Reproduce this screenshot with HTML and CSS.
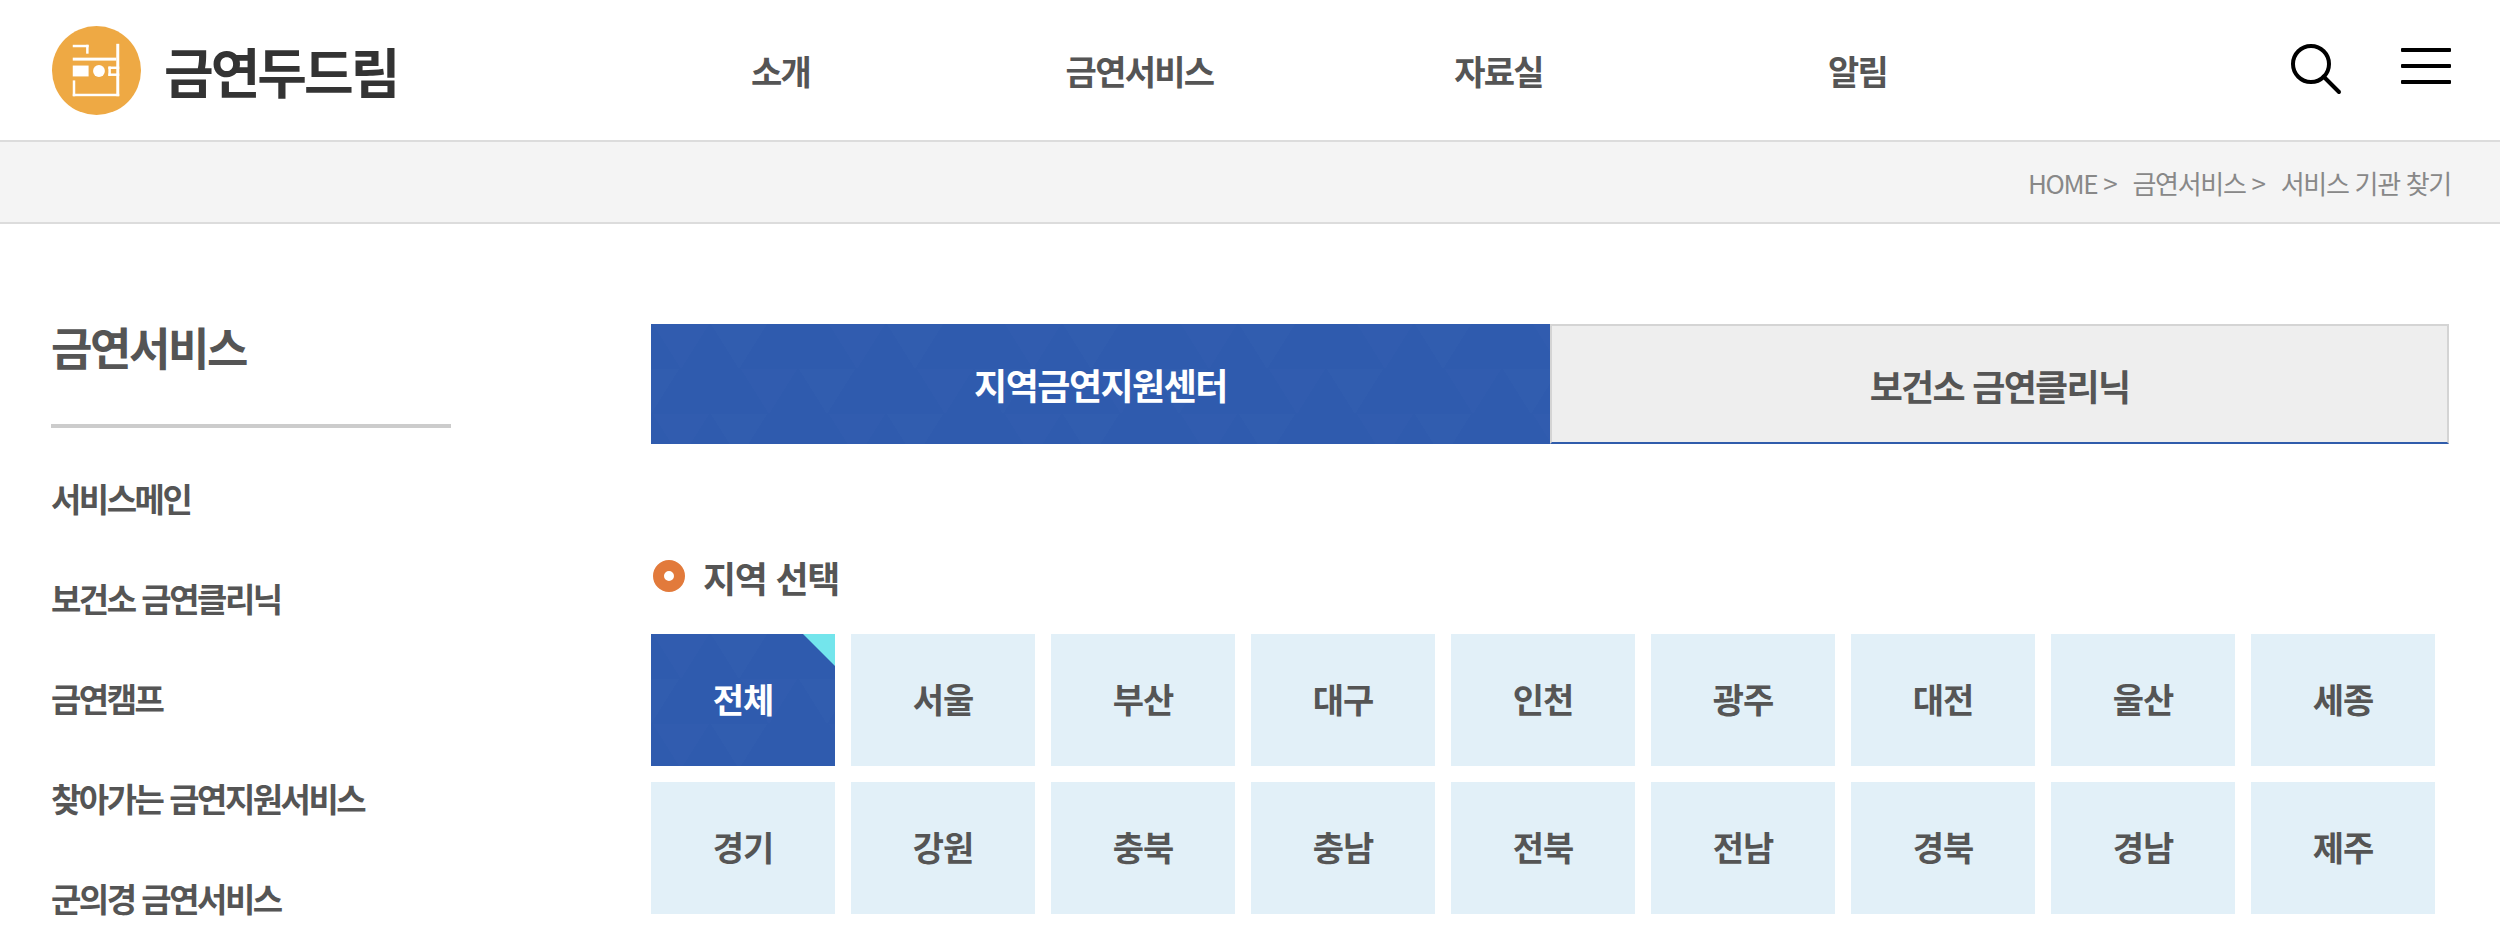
FILE: index.html
```html
<!DOCTYPE html>
<html lang="ko">
<head>
<meta charset="UTF-8">
<title>금연두드림</title>
<link rel="stylesheet" href="styles.css">
</head>
<body>
<header class="header">
  <a class="logo" href="#">
    <svg class="logo-mark" viewBox="0 0 90 90">
      <circle cx="45" cy="45" r="45" fill="#eea944"/>
      <g fill="#fff">
        <rect x="21" y="19" width="16" height="2.5"/>
        <rect x="34.5" y="19" width="2.5" height="9"/>
        <rect x="21" y="32" width="44" height="3"/>
        <rect x="65" y="18" width="3" height="53"/>
        <rect x="21" y="40" width="16" height="11"/>
        <circle cx="47.5" cy="45.5" r="6"/>
        <rect x="57" y="41" width="11" height="2.5"/>
        <rect x="57" y="48" width="11" height="2.5"/>
        <rect x="57" y="41" width="2.5" height="9.5"/>
        <rect x="21" y="55" width="2.5" height="16"/>
        <rect x="21" y="68.5" width="47" height="2.5"/>
      </g>
    </svg>
    <span class="logo-text">금연두드림</span>
  </a>
  <nav class="gnb">
    <a href="#">소개</a>
    <a href="#">금연서비스</a>
    <a href="#">자료실</a>
    <a href="#">알림</a>
  </nav>
  <div class="util">
    <svg class="icon-search" viewBox="0 0 52 52">
      <circle cx="21" cy="21" r="18" fill="none" stroke="#000" stroke-width="4"/>
      <path d="M33.5 33.5 L49 49" stroke="#000" stroke-width="4" stroke-linecap="round"/>
    </svg>
    <div class="icon-menu"><span></span><span></span><span></span></div>
  </div>
</header>

<div class="breadcrumb">
  <span>HOME &gt;</span>
  <span>금연서비스 &gt;</span>
  <span>서비스 기관 찾기</span>
</div>

<div class="wrap">
  <aside class="side">
    <h2 class="side-title">금연서비스</h2>
    <ul class="side-menu">
      <li>서비스메인</li>
      <li>보건소 금연클리닉</li>
      <li>금연캠프</li>
      <li>찾아가는 금연지원서비스</li>
      <li>군의경 금연서비스</li>
    </ul>
  </aside>

  <main class="content">
    <div class="tabs">
      <a class="tab tab-on" href="#">지역금연지원센터</a>
      <a class="tab" href="#">보건소 금연클리닉</a>
    </div>

    <h3 class="sec-title">지역 선택</h3>
    <div class="region-grid">
      <a class="region region-on" href="#">전체</a>
      <a class="region" href="#">서울</a>
      <a class="region" href="#">부산</a>
      <a class="region" href="#">대구</a>
      <a class="region" href="#">인천</a>
      <a class="region" href="#">광주</a>
      <a class="region" href="#">대전</a>
      <a class="region" href="#">울산</a>
      <a class="region" href="#">세종</a>
      <a class="region" href="#">경기</a>
      <a class="region" href="#">강원</a>
      <a class="region" href="#">충북</a>
      <a class="region" href="#">충남</a>
      <a class="region" href="#">전북</a>
      <a class="region" href="#">전남</a>
      <a class="region" href="#">경북</a>
      <a class="region" href="#">경남</a>
      <a class="region" href="#">제주</a>
    </div>
  </main>
</div>
</body>
</html>
```
FILE: styles.css
```css
* {
  box-sizing: border-box;
}

html, body {
  height: 952px;
  overflow: hidden;
}

body {
  margin: 0;
  background-color: #fff;
  color: #555;
  font-family: "Noto Sans CJK KR", "Noto Sans", sans-serif;
}

a {
  color: inherit;
  text-decoration: none;
}

.header {
  display: flex;
  align-items: center;
  height: 140px;
  padding: 0 49px 0 52px;
}

.logo {
  display: flex;
  align-items: center;
  width: 549px;
}

.logo-mark {
  width: 89px;
  height: 89px;
  margin-right: 23px;
}

.logo-text {
  font-size: 54px;
  font-weight: 700;
  letter-spacing: -3px;
  color: #333;
}

.gnb {
  display: flex;
  flex: 1;
}

.gnb a {
  width: 359px;
  text-align: center;
  font-size: 34px;
  font-weight: 700;
  letter-spacing: -1.7px;
}

.util {
  display: flex;
  align-items: center;
  gap: 59px;
}

.icon-search {
  width: 52px;
  height: 52px;
  margin-bottom: 2px;
}

.icon-menu {
  display: flex;
  flex-direction: column;
  gap: 12px;
  width: 50px;
  margin-bottom: 8px;
}

.icon-menu span {
  height: 4px;
  background-color: #000;
  border-radius: 1px;
}

.breadcrumb {
  display: flex;
  justify-content: flex-end;
  align-items: center;
  gap: 16px;
  height: 84px;
  padding-right: 49px;
  background-color: #f4f4f4;
  border-top: 2px solid #dcdcdc;
  border-bottom: 2px solid #dcdcdc;
  color: #888;
  font-size: 26px;
  letter-spacing: -1.3px;
}

.wrap {
  display: flex;
  padding: 100px 0 0 51px;
}

.side {
  width: 400px;
  margin-right: 200px;
}

.side-title {
  margin: 0;
  padding-bottom: 54px;
  border-bottom: 4px solid #ccc;
  font-size: 45px;
  font-weight: 700;
  line-height: 46px;
  letter-spacing: -2.4px;
}

.side-menu {
  margin: 20px 0 0;
  padding: 0;
  list-style: none;
}

.side-menu li {
  height: 100px;
  line-height: 100px;
  font-size: 33px;
  font-weight: 700;
  letter-spacing: -2.5px;
}

.tabs {
  display: flex;
  width: 1798px;
}

.tab {
  flex: 0 0 899px;
  height: 120px;
  line-height: 118px;
  text-align: center;
  font-size: 36px;
  font-weight: 700;
  letter-spacing: -1.7px;
  background-color: #eee;
  border: 2px solid #d4d4d4;
  border-bottom: 2px solid #305cab;
}

/* triangle texture on the selected items */
.tab.tab-on,
.region.region-on {
  color: #fff;
  background-color: #2f5bae;
  background-image:
    conic-gradient(from -32deg at 50% 50%, rgba(255,255,255,0.012) 64deg, transparent 0),
    conic-gradient(from -32deg at 50% 50%, rgba(255,255,255,0.012) 64deg, transparent 0),
    conic-gradient(from -32deg at 50% 50%, rgba(255,255,255,0.006) 64deg, transparent 0),
    conic-gradient(from -32deg at 50% 50%, rgba(255,255,255,0.006) 64deg, transparent 0);
  background-size: 176px 90px;
  background-position: 0 0, 88px 45px, -58px 0, 30px 45px;
  border: 0;
}

.tab.tab-on {
  line-height: 120px;
  letter-spacing: -1.5px;
}

.sec-title {
  display: flex;
  align-items: center;
  margin: 103px 0 0 2px;
  height: 60px;
  font-size: 36px;
  font-weight: 700;
  letter-spacing: -1.3px;
}

.sec-title::before {
  content: "";
  width: 10px;
  height: 10px;
  margin: 0 18px 2px 0;
  border-radius: 50%;
  background-color: #fff;
  border: 11px solid #e27a3b;
}

.region-grid {
  display: grid;
  grid-template-columns: repeat(9, 184px);
  grid-auto-rows: 132px;
  gap: 16px;
  margin-top: 27px;
}

.region {
  display: flex;
  align-items: center;
  justify-content: center;
  position: relative;
  padding-bottom: 3px;
  background-color: #e2f0f8;
  font-size: 34px;
  font-weight: 700;
  letter-spacing: -1px;
}

.region-on::after {
  content: "";
  position: absolute;
  top: 0;
  right: 0;
  border-top: 32px solid #73e5ec;
  border-left: 32px solid transparent;
}
```
